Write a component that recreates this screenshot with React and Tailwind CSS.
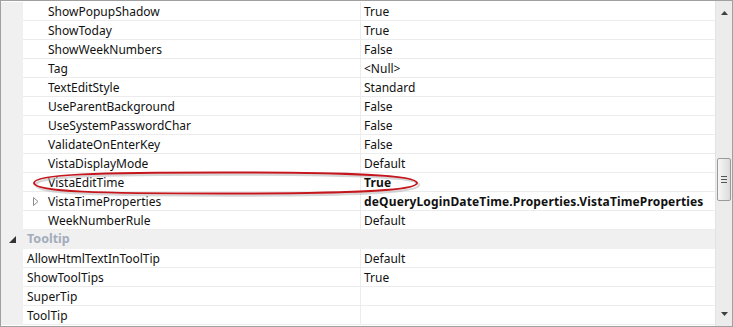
import React from 'react';

const rows = [
  { name: 'ShowPopupShadow', value: 'True' },
  { name: 'ShowToday', value: 'True' },
  { name: 'ShowWeekNumbers', value: 'False' },
  { name: 'Tag', value: '<Null>' },
  { name: 'TextEditStyle', value: 'Standard' },
  { name: 'UseParentBackground', value: 'False' },
  { name: 'UseSystemPasswordChar', value: 'False' },
  { name: 'ValidateOnEnterKey', value: 'False' },
  { name: 'VistaDisplayMode', value: 'Default' },
  { name: 'VistaEditTime', value: 'True', bold: true },
  { name: 'VistaTimeProperties', value: 'deQueryLoginDateTime.Properties.VistaTimeProperties', bold: true, expander: true },
  { name: 'WeekNumberRule', value: 'Default' },
];

const tooltipRows = [
  { name: 'AllowHtmlTextInToolTip', value: 'Default' },
  { name: 'ShowToolTips', value: 'True' },
  { name: 'SuperTip', value: '' },
  { name: 'ToolTip', value: '' },
];

// hand-drawn style loop around the VistaEditTime row
const loop =
  'M4 13 C4 4, 70 2.5, 195 2.5 C318 2.5, 387 5, 387 13 C387 21, 318 23.5, 195 23.5 C70 23.5, 4 22, 4 13 Z';

const PropRow = ({ row, indent }) => (
  <div className="flex h-[19px] shrink-0">
    <div className="w-[22px] shrink-0 bg-[#f0f0f0]" />
    <div className="flex flex-1 border-b border-[#ececec]">
      <div className={`relative flex w-[337px] shrink-0 items-center pt-px ${indent ? 'pl-[25px]' : 'pl-[4px]'}`}>
        {row.expander && (
          <svg className="absolute left-[10px] top-[5px]" width="6" height="9" viewBox="0 0 6 9">
            <path d="M0.5 0.5 L5 4.5 L0.5 8.5 Z" fill="none" stroke="#8c8c8c" strokeWidth="1" />
          </svg>
        )}
        {row.name}
      </div>
      <div
        className={`flex flex-1 items-center border-l border-[#ececec] pl-[3px] pt-px ${row.bold ? 'font-bold tracking-[0.15px]' : ''}`}
      >
        {row.value}
      </div>
    </div>
  </div>
);

const ScrollBar = () => (
  <div className="relative flex w-[17px] shrink-0 flex-col items-center border-l border-[#e3e3e3] bg-[#ececec]">
    <div className="flex h-[20px] items-center justify-center pt-[4px]">
      <svg width="7" height="4" viewBox="0 0 7 4">
        <path d="M3.5 0 L7 4 L0 4 Z" fill="#404040" />
      </svg>
    </div>
    <div className="absolute left-[1px] top-[157px] flex h-[43px] w-[14px] items-center justify-center rounded-[2px] border border-[#9a9a9a] bg-gradient-to-r from-[#f6f6f6] to-[#dcdcdc]">
      <div className="flex flex-col gap-[2px]">
        <div className="h-px w-[6px] bg-[#555]" />
        <div className="h-px w-[6px] bg-[#555]" />
        <div className="h-px w-[6px] bg-[#555]" />
      </div>
    </div>
    <div className="mt-auto flex h-[20px] items-center justify-center pb-[4px]">
      <svg width="7" height="4" viewBox="0 0 7 4">
        <path d="M0 0 L7 0 L3.5 4 Z" fill="#404040" />
      </svg>
    </div>
  </div>
);

export default function App() {
  return (
    <div
      className="relative flex h-[327px] w-[733px] overflow-hidden border border-[#a0a0a0] bg-white text-[12px] text-[#111]"
      style={{ fontFamily: '"Noto Sans", "Liberation Sans", sans-serif' }}
    >
      <div className="flex flex-1 flex-col overflow-hidden pt-px">
        {rows.map((r) => (
          <PropRow key={r.name} row={r} indent />
        ))}
        <div className="flex h-[19px] shrink-0 items-center border-b border-[#f0f0f0] bg-[#f0f0f0]">
          <div className="flex w-[22px] shrink-0 items-center justify-center">
            <svg width="7" height="7" viewBox="0 0 7 7">
              <path d="M7 0 L7 7 L0 7 Z" fill="#333" />
            </svg>
          </div>
          <div className="pl-[4px] pt-px text-[12.5px] font-bold text-[#a3acbb]">Tooltip</div>
        </div>
        {tooltipRows.map((r) => (
          <PropRow key={r.name} row={r} />
        ))}
      </div>
      <ScrollBar />
      <svg className="pointer-events-none absolute left-[29px] top-[169px]" width="396" height="28" viewBox="0 0 396 28">
        <path d={loop} transform="translate(2 2)" fill="none" stroke="#b4b4b4" strokeWidth="2.5" opacity="0.55" />
        <path d={loop} fill="none" stroke="#c4161c" strokeWidth="2" />
      </svg>
    </div>
  );
}
